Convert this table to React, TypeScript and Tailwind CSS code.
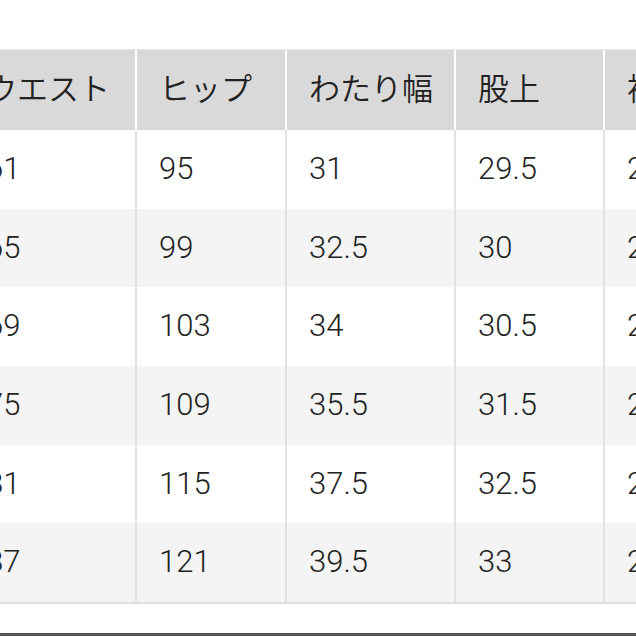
const headers = ["ウエスト", "ヒップ", "わたり幅", "股上", "裾幅"]

const rows = [
  ["61", "95", "31", "29.5", "20.5"],
  ["65", "99", "32.5", "30", "21"],
  ["69", "103", "34", "30.5", "21.5"],
  ["75", "109", "35.5", "31.5", "22"],
  ["81", "115", "37.5", "32.5", "23"],
  ["87", "121", "39.5", "33", "24"],
]

// column widths; first column starts off-screen to the left
const widths = ["w-[173px]", "w-[150px]", "w-[169px]", "w-[149px]", "w-[150px]"]

export default function App() {
  return (
    <div
      className="flex h-[636px] w-[636px] flex-col overflow-hidden bg-white text-[#222]"
      style={{ fontFamily: '"Liberation Sans", "Noto Sans CJK JP", sans-serif' }}
    >
      <div className="h-[49px] shrink-0" />
      <div className="ml-[-36px] flex flex-col">
        <div className="flex h-[81px] border-t border-[#e6e6e6] bg-[#d9d9d9]">
          {headers.map((h, i) => (
            <div
              key={h}
              className={`${widths[i]} flex shrink-0 items-center border-r-2 border-white pl-[22px] text-[31px] font-[350]`}
            >
              {h}
            </div>
          ))}
        </div>
        {rows.map((row, r) => (
          <div
            key={r}
            className={`flex h-[78.67px] ${r % 2 === 1 ? "bg-[#f4f4f4]" : "bg-white"}`}
          >
            {row.map((v, i) => (
              <div
                key={i}
                className={`${widths[i]} flex shrink-0 items-center border-r-2 border-[#e2e2e2] pl-[22px] font-['Roboto'] text-[31px] font-light`}
              >
                {v}
              </div>
            ))}
          </div>
        ))}
        <div className="h-[2px] bg-[#e0e0e0]" />
      </div>
      <div className="flex-1" />
      <div className="h-[3px] shrink-0 bg-[#555555]" />
    </div>
  )
}
